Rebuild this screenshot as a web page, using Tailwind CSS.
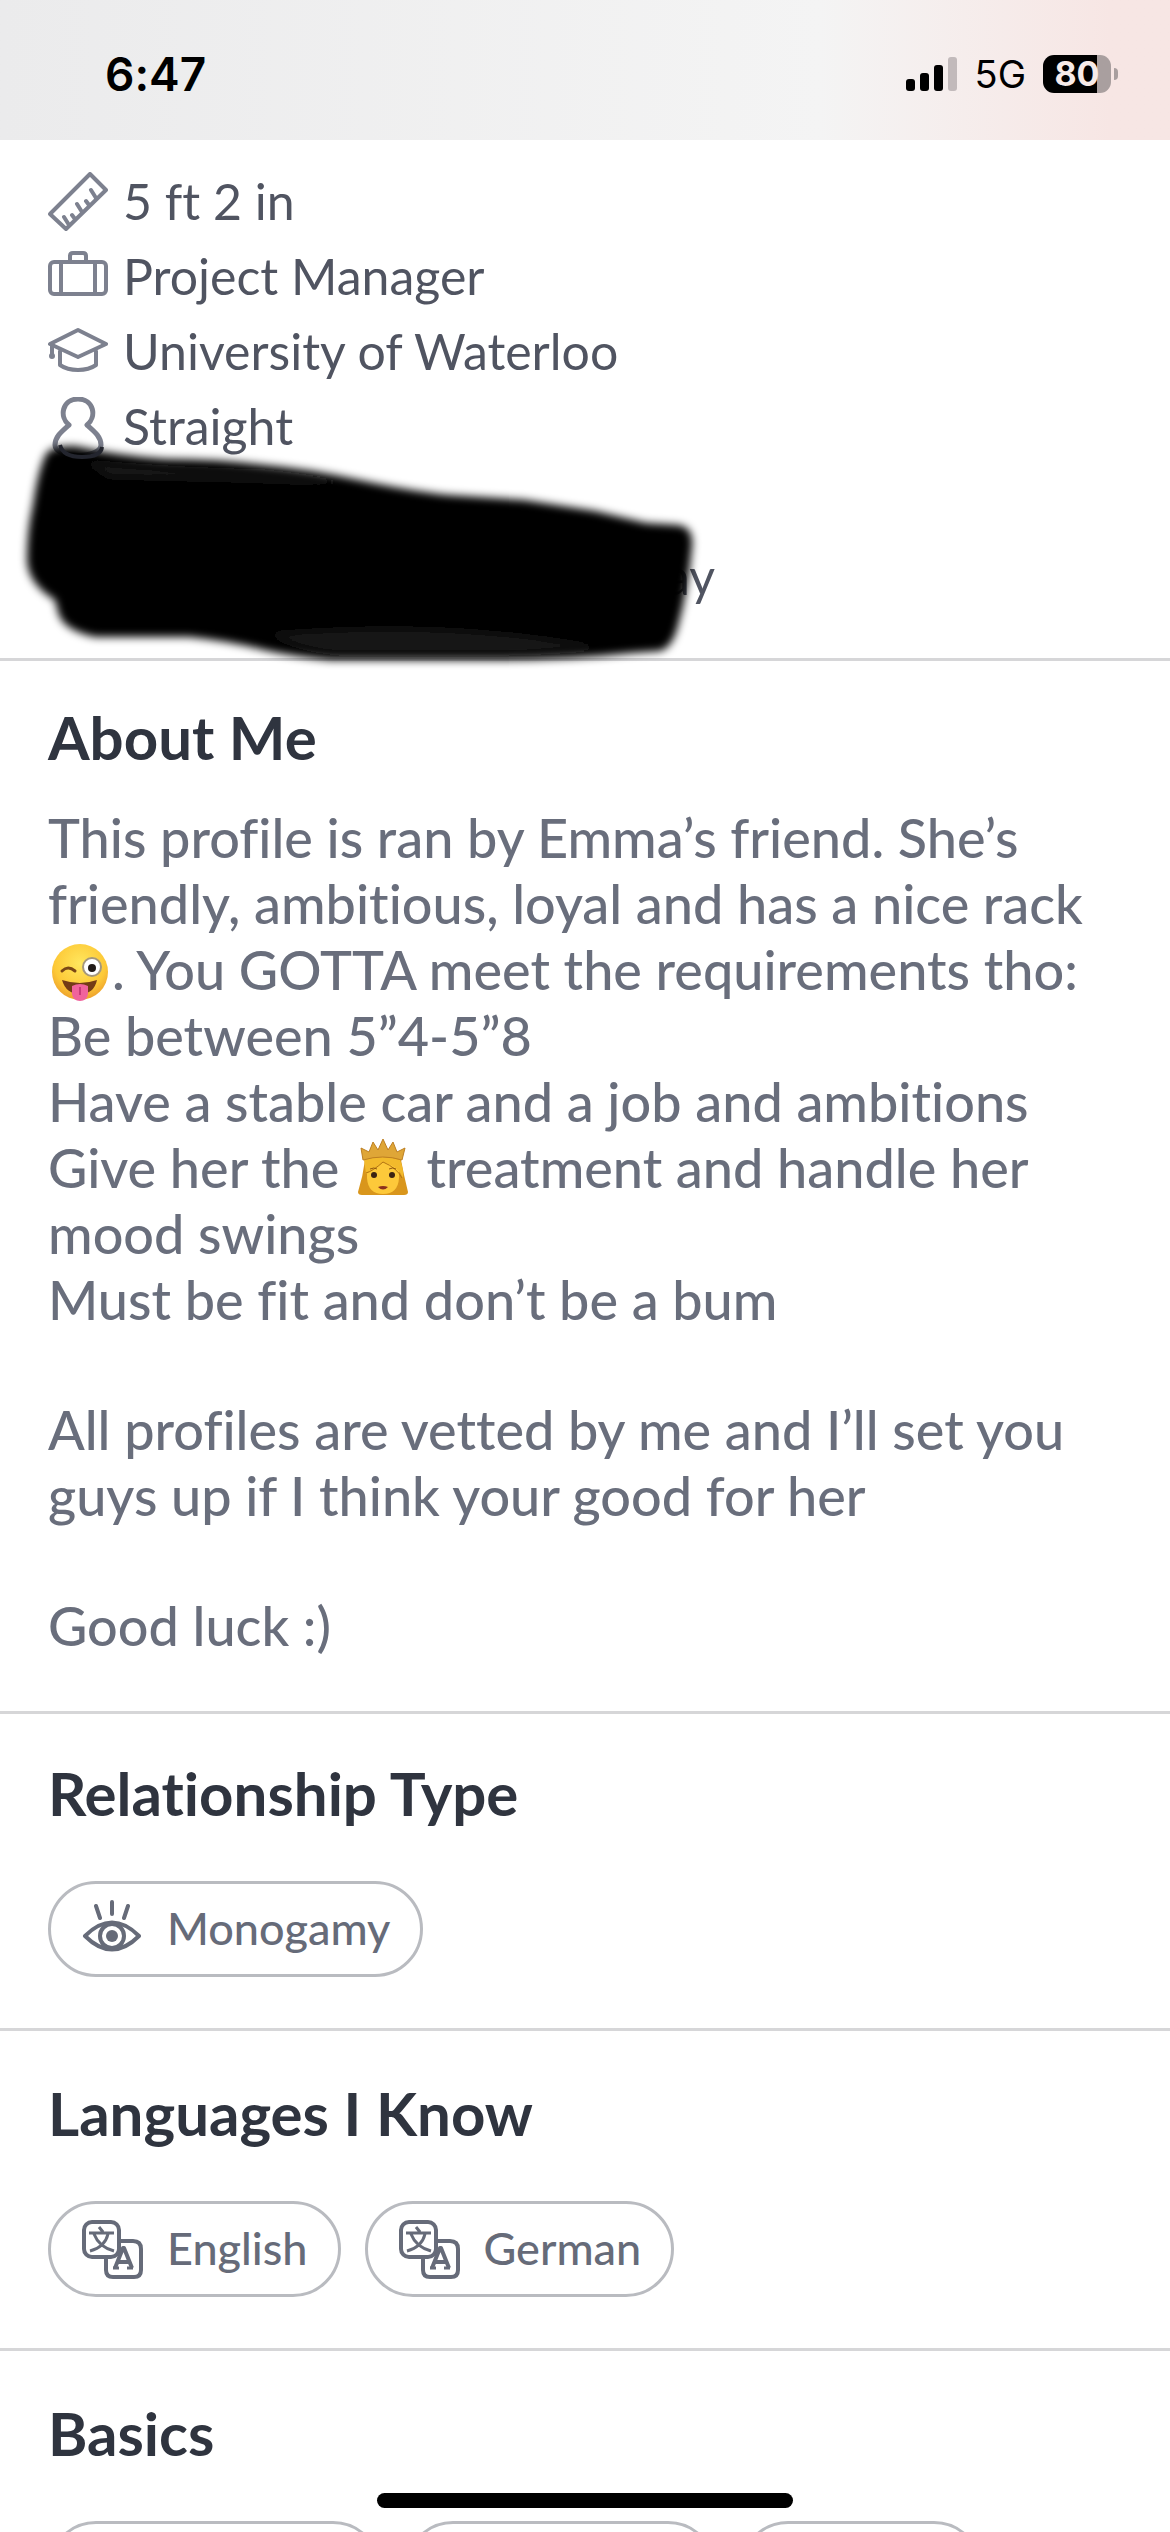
<!DOCTYPE html>
<html lang="en">
<head>
  <meta charset="UTF-8" />
  <meta name="viewport" content="width=device-width, initial-scale=1.0" />
  <title>Profile</title>
  <script src="https://cdn.jsdelivr.net/npm/@tailwindcss/browser@4"></script>
</head>
<body class="bg-white">
  <svg class="hidden">
    <symbol id="translate" viewBox="0 0 62 60">
      <g fill="none" stroke="currentColor" stroke-width="4" stroke-linecap="round" stroke-linejoin="round">
        <rect x="3" y="3" width="35" height="35" rx="8" />
        <path d="M25 39v12q0 7 7 7h21q7 0 7-7V30q0-8-8-8H39" />
        <g stroke-width="3" stroke-linecap="butt">
          <path d="M8 14h25M18 8l4 5M27 15q-3 13-18 17M13 15q5 13 20 17" />
          <path stroke-width="4" d="M34 49l8-20h1l8 20M37 43h11" />
          <path d="M32 49h6M46 49h6" />
        </g>
      </g>
    </symbol>
  </svg>

  <div class="relative flex flex-col h-screen overflow-hidden font-[Lato,'Open_Sans',sans-serif] [font-variant-ligatures:none]">
    <header class="flex shrink-0 items-center justify-between h-[140px] pt-2 pl-[105px] pr-[52px] bg-linear-to-r from-[#ebebec] via-[#f4f4f4] via-70% to-[#f7e6e4] to-95% text-black font-[Inter,sans-serif]">
      <time class="text-[46px] font-semibold">6:47</time>
      <div class="flex items-center gap-[17px]">
        <svg width="52" height="34" viewBox="0 0 52 34">
          <rect y="22" width="9" height="12" rx="3" />
          <rect x="14" y="16" width="9" height="18" rx="3" />
          <rect x="28" y="8" width="9" height="26" rx="3" />
          <rect x="42" width="9" height="34" rx="3" fill="#c2babb" />
        </svg>
        <span class="text-[38px] leading-[40px]">5G</span>
        <div class="flex items-center gap-[3px]">
          <div class="flex items-center justify-center w-[68px] h-[38px] rounded-[11px] bg-linear-to-r from-black from-80% to-[#a99f9f] to-80% text-[34px] leading-[38px] font-bold text-[#f7ebe9]">80</div>
          <div class="w-1 h-3 rounded-r-full bg-[#a99f9f]"></div>
        </div>
      </div>
    </header>

    <main>
      <section class="relative h-[518px] px-12 pt-6 text-[50px] leading-[75px] text-[#505461]">
        <ul>
          <li class="flex items-center gap-[15px]">
            <svg width="60" height="60" viewBox="0 0 60 60" fill="none" stroke="#7d818f" stroke-width="4" stroke-linejoin="round" stroke-linecap="round">
              <path d="M42 2L58 18L18 57L2 42ZM21 53l-5-8M27 47l-3-4M34 40l-5-8M41 33l-3-4M48 26l-5-8" />
            </svg>
            5 ft 2 in
          </li>
          <li class="flex items-center gap-[15px]">
            <svg width="60" height="60" viewBox="0 0 60 60" fill="none" stroke="#7d818f" stroke-width="4">
              <rect x="2" y="15" width="56" height="32" rx="4" />
              <path d="M13 15v32M47 15v32M22 15V9q0-3 3-3h10q3 0 3 3v6" />
            </svg>
            Project Manager
          </li>
          <li class="flex items-center gap-[15px]">
            <svg width="60" height="60" viewBox="0 0 60 60" fill="none" stroke="#7d818f" stroke-width="4" stroke-linejoin="round" stroke-linecap="round">
              <path d="M30 8L58 22L30 35L2 22ZM12 29v14q7 5 18 5t18-5V29M4 24v10" />
              <circle cx="4" cy="34" r="1" />
            </svg>
            University of Waterloo
          </li>
          <li class="flex items-center gap-[15px]">
            <svg width="60" height="60" viewBox="0 0 60 60" fill="none" stroke="#7d818f" stroke-width="5" stroke-linejoin="round">
              <path d="M21 28C11 20 14 2 30 2s19 18 9 26c8 7 14 12 14 20 0 14-46 14-46 0 0-8 6-13 14-20Z" />
            </svg>
            Straight
          </li>
          <li class="mt-[75px] pl-[617px]">ay</li>
        </ul>
        <!-- marker scribble -->
        <svg class="absolute left-0 top-[280px]" width="720" height="250" viewBox="0 420 720 250">
          <defs>
            <filter id="soft" x="-5%" y="-10%" width="110%" height="120%">
              <feGaussianBlur stdDeviation="4" />
            </filter>
          </defs>
          <g filter="url(#soft)">
            <path d="M46 454Q52 445 75 446Q120 456 165 459Q220 459 264 465Q310 469 359 480Q410 491 448 495L524 500L595 511L646 523L678 525Q694 527 692 547Q688 590 678 626Q672 648 660 651L632 653Q570 660 496 660L330 660Q290 656 264 650Q230 641 189 637L95 637Q62 630 58 612L55 600Q28 584 27 560Q27 530 33 505Q38 470 46 454Z" />
            <path d="M85 462Q170 470 264 472Q320 478 350 484L240 480L110 477Z" fill="#171717" />
            <path d="M270 634Q360 627 440 630Q530 634 600 648Q540 653 480 653H340Q300 650 270 634Z" fill="#171717" />
          </g>
          <path d="M60 445q3 12 22 12t20-10" fill="none" stroke="#23252e" stroke-width="4" />
        </svg>
      </section>

      <section class="border-t-[3px] border-[#d6d6d8] px-12 pt-[46px] pb-[52px]">
        <h2 class="text-[60px] leading-[60px] font-bold text-[#2f343f]">About Me</h2>
        <div class="mt-[38px] text-[54px] leading-[66px] font-medium text-[#696e7c]">
          <p>
            This profile is ran by Emma’s friend. She’s<br />
            friendly, ambitious, loyal and has a nice rack<br />
            <svg class="inline-block align-[-12px] mx-[2px]" width="60" height="60" viewBox="0 0 60 60" role="img" aria-label="winking face with tongue">
              <defs>
                <radialGradient id="face" cx=".5" cy=".35" r=".7">
                  <stop offset="0" stop-color="#ffe75e" />
                  <stop offset=".65" stop-color="#fdc937" />
                  <stop offset="1" stop-color="#e9962a" />
                </radialGradient>
              </defs>
              <circle cx="30" cy="30" r="28" fill="url(#face)" />
              <path d="M12 29q6-6 13 0" fill="none" stroke="#7a4716" stroke-width="3" stroke-linecap="round" />
              <circle cx="42" cy="25" r="9" fill="#fff" stroke="#a4977c" stroke-width="2" />
              <circle cx="42" cy="26" r="4" fill="#211a17" />
              <path d="M12 38q18 6 35 0q-3 14-17 14T12 38Z" fill="#733b16" />
              <path d="M22 44q8-4 16 0v8q-1 7-8 7t-8-7Z" fill="#f0639c" />
              <path d="M30 45v8" stroke="#c83b78" stroke-width="2" />
            </svg>. You GOTTA meet the requirements tho:<br />
            Be between 5”4-5”8<br />
            Have a stable car and a job and ambitions<br />
            Give her the
            <svg class="inline-block align-[-10px] mx-[2px]" width="56" height="60" viewBox="0 0 56 60" role="img" aria-label="princess">
              <path d="M10 22Q28 10 46 22Q49 38 53 54Q53 57 49 57H7Q3 57 3 54Q8 38 10 22Z" fill="#d9961c" />
              <path d="M12 30Q28 18 44 30V40Q43 56 28 56T12 40Z" fill="#fdc93a" />
              <path d="M9 22Q27 16 45 22Q49 32 48 40Q43 28 28 24Q20 32 11 36Z" fill="#f2ba2c" />
              <path d="M28 24Q18 33 11 35M28 24Q42 30 47 40" fill="none" stroke="#b27312" stroke-width="1" />
              <path d="M8 22L6 10L14 14L18 4L23 12L28 1L33 12L38 4L42 14L50 10L47 22Q28 16 8 22Z" fill="#dfa637" stroke="#bd7f22" stroke-width="1" />
              <circle cx="19" cy="37" r="3" fill="#3b2312" />
              <circle cx="37" cy="37" r="3" fill="#3b2312" />
              <path d="M15 31q4-2 7 0M34 31q4-2 7 0" fill="none" stroke="#92590f" stroke-width="1" />
              <path d="M23 49q5-2 10 0q-5 5-10 0Z" fill="#8c311c" />
            </svg>
            treatment and handle her<br />
            mood swings<br />
            Must be fit and don’t be a bum
          </p>
          <p class="mt-16">
            All profiles are vetted by me and I’ll set you<br />
            guys up if I think your good for her
          </p>
          <p class="mt-16">Good luck :)</p>
        </div>
      </section>

      <section class="border-t-[3px] border-[#d6d6d8] px-12 pt-[49px] pb-[51px]">
        <h2 class="text-[60px] leading-[60px] font-bold text-[#2f343f]">Relationship Type</h2>
        <div class="mt-[58px] flex gap-6 text-[45px] font-medium text-[#666b79]">
          <div class="flex items-center gap-[26px] h-24 pl-[30px] pr-[30px] rounded-full border-[3px] border-[#b9bbc0]">
            <svg width="60" height="60" viewBox="0 0 60 60" fill="none" stroke="currentColor" stroke-width="4" stroke-linejoin="round" stroke-linecap="round">
              <path d="M4 37Q31 10 58 37Q31 64 4 37ZM31 3v12M15 7l4 12M47 7l-4 12" />
              <circle cx="31" cy="37" r="12" />
              <circle cx="31" cy="37" r="6" fill="currentColor" stroke="none" />
            </svg>
            Monogamy
          </div>
        </div>
      </section>

      <section class="border-t-[3px] border-[#d6d6d8] px-12 pt-[52px] pb-[51px]">
        <h2 class="text-[60px] leading-[60px] font-bold text-[#2f343f]">Languages I Know</h2>
        <div class="mt-[58px] flex gap-6 text-[45px] font-medium text-[#666b79]">
          <div class="flex items-center gap-6 h-24 pl-[30px] pr-[30px] rounded-full border-[3px] border-[#b9bbc0]">
            <svg width="62" height="60"><use href="#translate" /></svg>
            English
          </div>
          <div class="flex items-center gap-6 h-24 pl-[30px] pr-[30px] rounded-full border-[3px] border-[#b9bbc0]">
            <svg width="62" height="60"><use href="#translate" /></svg>
            German
          </div>
        </div>
      </section>

      <section class="border-t-[3px] border-[#d6d6d8] px-12 pt-[52px]">
        <h2 class="text-[60px] leading-[60px] font-bold text-[#2f343f]">Basics</h2>
        <div class="mt-[58px] flex gap-6">
          <div class="w-[333px] h-24 rounded-full border-[3px] border-[#b9bbc0]"></div>
          <div class="w-[311px] h-24 rounded-full border-[3px] border-[#b9bbc0]"></div>
          <div class="w-[242px] h-24 rounded-full border-[3px] border-[#b9bbc0]"></div>
        </div>
      </section>
    </main>

    <!-- home indicator -->
    <div class="absolute bottom-6 inset-x-0 mx-auto w-[416px] h-[15px] rounded-full bg-black"></div>
  </div>
</body>
</html>
